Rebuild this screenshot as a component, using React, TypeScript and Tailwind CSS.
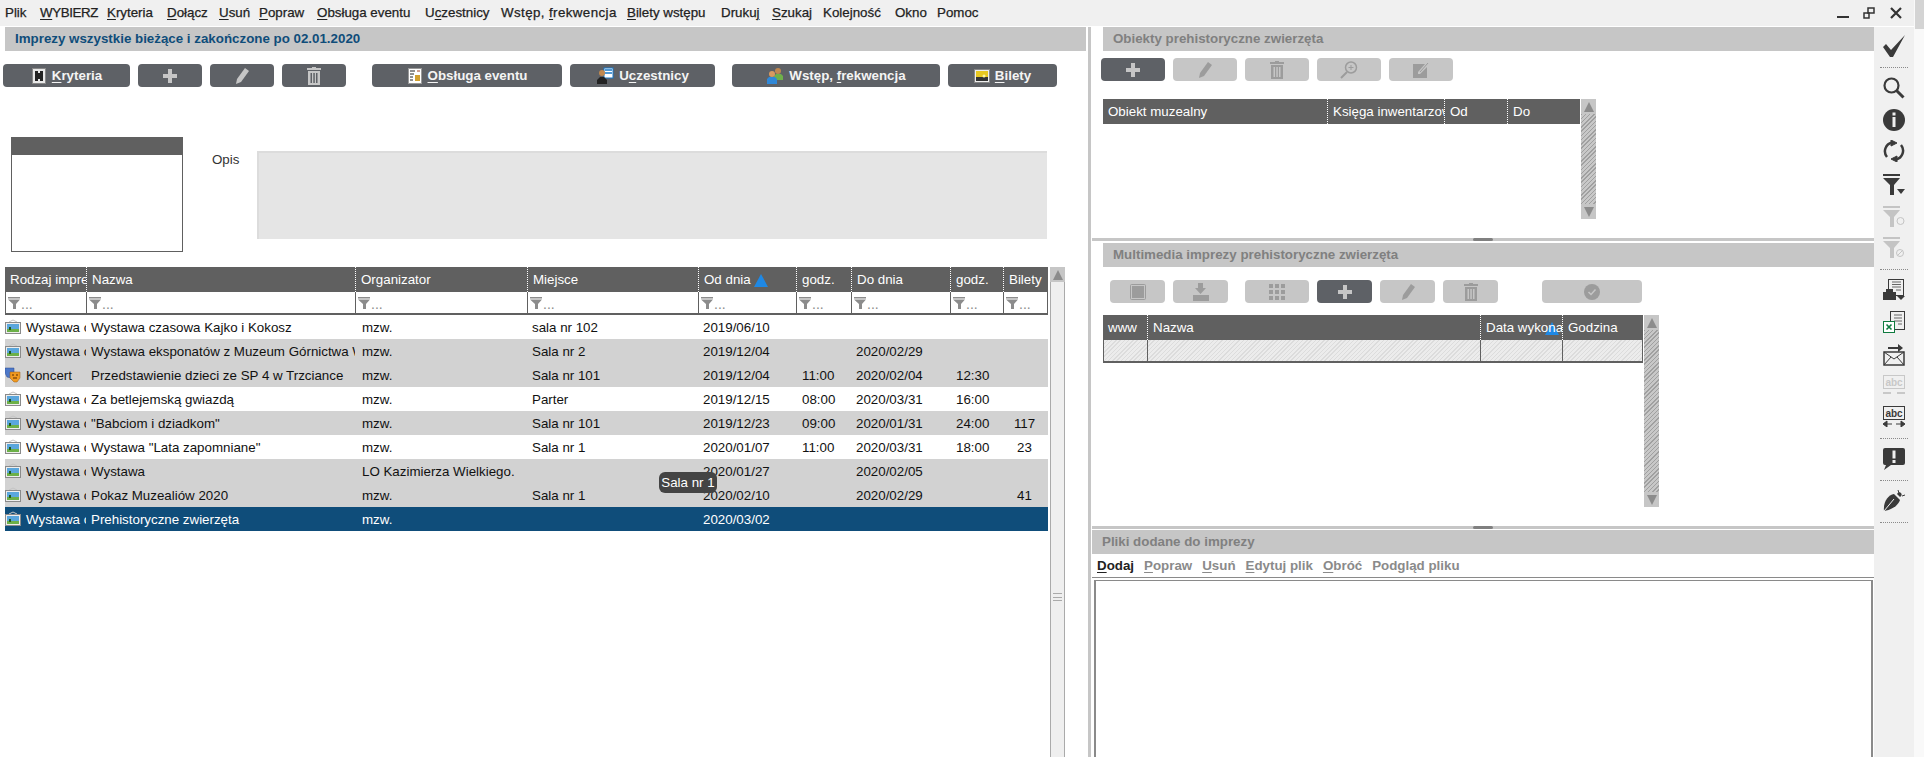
import React from "react";

const menu: [string, string][] = [
  ["Plik", "w-[35px]"],
  ["&WYBIERZ", "w-[67px] tracking-[-0.4px]"],
  ["&Kryteria", "w-[60px]"],
  ["&Dołącz", "w-[52px]"],
  ["&Usuń", "w-[40px]"],
  ["&Popraw", "w-[58px]"],
  ["&Obsługa eventu", "w-[108px]"],
  ["U&czestnicy", "w-[76px]"],
  ["Wstęp, &frekwencja", "w-[126px] tracking-[0.4px]"],
  ["&Bilety wstępu", "w-[94px]"],
  ["Druku&j", "w-[51px]"],
  ["&Szukaj", "w-[51px]"],
  ["Kolejność", "w-[72px]"],
  ["Okno", "w-[42px]"],
  ["Pomoc", "w-[50px]"],
];

// "&" marks the underlined access key letter
const Key = ({ text }: { text: string }) => {
  const i = text.indexOf("&");
  if (i < 0) return <>{text}</>;
  return (
    <>
      {text.slice(0, i)}
      <u className="underline-offset-2">{text[i + 1]}</u>
      {text.slice(i + 2)}
    </>
  );
};

const Plus = () => (
  <svg width="16" height="16" viewBox="0 0 16 16"><path d="M6 1h4v5h5v4h-5v5H6v-5H1V6h5z" fill="currentColor" /></svg>
);
const Pencil = () => (
  <svg width="16" height="18" viewBox="0 0 16 18"><path d="M11 1l4 3-8 11-5 2 1-5z" fill="currentColor" /></svg>
);
const Trash = () => (
  <svg width="14" height="18" viewBox="0 0 14 18"><path d="M5 0h4v1h5v2H0V1h5zM1 4h12v14H1zM3.500 6v10h1.500V6zM6.300 6v10h1.500V6zM9 6v10h1.500V6z" fill="currentColor" fillRule="evenodd" /></svg>
);
const ZoomPlus = () => (
  <svg width="18" height="18" viewBox="0 0 18 18" fill="none" stroke="currentColor"><circle cx="11" cy="6.500" r="5.500" strokeWidth="1.500" /><path d="M11 4v5M8.500 6.500h5" /><path d="M7 11l-6 6" strokeWidth="2" /></svg>
);
const EditBox = () => (
  <svg width="16" height="16" viewBox="0 0 16 16"><path d="M0 2h12L5 10v2h2l7-7v11H0z" fill="currentColor" /><path d="M7 10l8-9" stroke="currentColor" /></svg>
);
const Stop = () => (
  <svg width="16" height="16" viewBox="0 0 16 16" fill="none"><rect x="0.500" y="0.500" width="15" height="15" rx="1" stroke="currentColor" /><rect x="2" y="2" width="12" height="12" fill="currentColor" /></svg>
);
const Download = () => (
  <svg width="18" height="18" viewBox="0 0 18 18"><path d="M6 0h5v5h3l-5.500 6L3 5h3zM1 12h16v6H1z" fill="currentColor" /></svg>
);
const Grid = () => (
  <svg width="16" height="16" viewBox="0 0 16 16" fill="currentColor">
    {[0, 6, 12].map((y) => [0, 6, 12].map((x) => <rect key={`${x}-${y}`} x={x} y={y} width="4" height="4" />))}
  </svg>
);
const CheckCircle = () => (
  <svg width="16" height="16" viewBox="0 0 16 16"><circle cx="8" cy="8" r="8" fill="currentColor" /><path d="M4.500 8l2.500 2.500 4.500-5" fill="none" stroke="#c6c6c6" strokeWidth="1.500" /></svg>
);

const PictureIcon = () => (
  <svg width="16" height="16" viewBox="0 0 16 16" className="shrink-0">
    <path d="M4 3l4-2 4 2" fill="none" stroke="#c4c4c4" />
    <rect x="0.500" y="3.500" width="15" height="11" fill="#eeeeee" stroke="#8a8a8a" />
    <rect x="2" y="5" width="12" height="5" fill="#5aa6dc" />
    <rect x="2" y="10" width="12" height="3" fill="#6cb048" />
    <rect x="4" y="8" width="2" height="3" fill="#1f5a20" />
  </svg>
);
const MasksIcon = () => (
  <svg width="16" height="16" viewBox="0 0 16 16" className="shrink-0">
    <path d="M0 1h9v6l-3 4-4-1-2-4z" fill="#4d78c8" stroke="#2a4a90" strokeWidth="0.500" />
    <path d="M5 5h10v6l-3 4H9l-4-4z" fill="#f09a20" stroke="#9a5a10" strokeWidth="0.500" />
    <path d="M7 8h2M11 8h2M8 11h4" stroke="#5a2a00" />
  </svg>
);
const PuzzleDoc = () => (
  <svg width="16" height="18" viewBox="0 0 16 18"><rect x="1.500" y="1.500" width="13" height="15" fill="#e8e8e8" stroke="#888" /><path d="M4 4h3v2h2V4h3v10H9v-2H7v2H4z" fill="#222" /></svg>
);
const EventDoc = () => (
  <svg width="16" height="18" viewBox="0 0 16 18"><rect x="1.500" y="1.500" width="13" height="15" fill="#fff" stroke="#999" /><path d="M3 4h5M3 7h4M3 10h3M3 13h3" stroke="#222" /><path d="M8 8h5v6H8z" fill="#d2a030" /><path d="M10 4h3" stroke="#a04020" /></svg>
);
const ParticipantIcon = () => (
  <svg width="18" height="18" viewBox="0 0 18 18"><rect x="8" y="1" width="9" height="10" fill="#fff" stroke="#1878c8" /><path d="M9 3h7M9 6h7" stroke="#1878c8" strokeWidth="1.500" /><circle cx="6" cy="6" r="3" fill="#c08850" /><path d="M1 17v-4l3-3h4l3 3v4z" fill="#222" /></svg>
);
const PeopleIcon = () => (
  <svg width="18" height="18" viewBox="0 0 18 18"><circle cx="12" cy="4" r="3" fill="#c08850" /><path d="M8 13V9l2-2h5l2 2v4z" fill="#6fb04a" /><circle cx="6" cy="7" r="3" fill="#d89a60" /><path d="M1 17v-5l2-2h6l2 2v5z" fill="#3088d8" /></svg>
);
const TicketIcon = () => (
  <svg width="16" height="14" viewBox="0 0 16 14"><rect x="0.500" y="0.500" width="15" height="13" fill="#eee" stroke="#888" /><rect x="2" y="2" width="12" height="6" fill="#e8c820" /><rect x="2" y="8" width="12" height="4" fill="#333" /><circle cx="10" cy="7" r="1.500" fill="#fff6a0" /></svg>
);

const Btn = ({ w, off, children }: { w: string; off?: boolean; children: React.ReactNode }) => (
  <button className={`${w} h-[23px] shrink-0 rounded-[4px] flex items-center justify-center gap-[5px] text-[13.33px] font-bold text-[#f4f4f4] ${off ? "bg-[#c6c6c6] text-[#999999]" : "bg-[#5e6166]"}`}>
    {children}
  </button>
);
const IconTint = ({ off, children }: { off?: boolean; children: React.ReactNode }) => (
  <span className={`flex ${off ? "text-[#9c9c9c]" : "text-[#c6c6c6]"}`}>{children}</span>
);

const Funnel = ({ className = "" }: { className?: string }) => (
  <svg width="12" height="12" viewBox="0 0 12 12" className={className}><path d="M0 0h12v1.500H0zM0 2.500h12L8 7v5H5V7z" fill="currentColor" /></svg>
);

const cols = ["w-[81px]", "w-[269px]", "w-[172px]", "w-[171px]", "w-[98px]", "w-[55px]", "w-[99px]", "w-[53px]", "w-[45px]"];
const heads = ["Rodzaj imprezy", "Nazwa", "Organizator", "Miejsce", "Od dnia", "godz.", "Do dnia", "godz.", "Bilety"];

type Row = { kind: "w" | "k"; cells: string[]; tone: string };
const W = "Wystawa czasowa";
const GRAY = "bg-[#d2d2d2] text-[#111111]";
const WHITE = "bg-white text-[#111111]";
const rows: Row[] = [
  { kind: "w", tone: WHITE, cells: [W, "Wystawa czasowa Kajko i Kokosz", "mzw.", "sala nr 102", "2019/06/10", "", "", "", ""] },
  { kind: "w", tone: GRAY, cells: [W, "Wystawa eksponatów z Muzeum Górnictwa Węglowego", "mzw.", "Sala nr 2", "2019/12/04", "", "2020/02/29", "", ""] },
  { kind: "k", tone: GRAY, cells: ["Koncert", "Przedstawienie dzieci ze SP 4 w Trzciance", "mzw.", "Sala nr 101", "2019/12/04", "11:00", "2020/02/04", "12:30", ""] },
  { kind: "w", tone: WHITE, cells: [W, "Za betlejemską gwiazdą", "mzw.", "Parter", "2019/12/15", "08:00", "2020/03/31", "16:00", ""] },
  { kind: "w", tone: GRAY, cells: [W, "\"Babciom i dziadkom\"", "mzw.", "Sala nr 101", "2019/12/23", "09:00", "2020/01/31", "24:00", "117"] },
  { kind: "w", tone: WHITE, cells: [W, "Wystawa \"Lata zapomniane\"", "mzw.", "Sala nr 1", "2020/01/07", "11:00", "2020/03/31", "18:00", "23"] },
  { kind: "w", tone: GRAY, cells: [W, "Wystawa", "LO Kazimierza Wielkiego.", "", "2020/01/27", "", "2020/02/05", "", ""] },
  { kind: "w", tone: GRAY, cells: [W, "Pokaz Muzealiów 2020", "mzw.", "Sala nr 1", "2020/02/10", "", "2020/02/29", "", "41"] },
  { kind: "w", tone: "bg-[#0f4d7a] text-white", cells: [W, "Prehistoryczne zwierzęta", "mzw.", "", "2020/03/02", "", "", "", ""] },
];

const SortUp = ({ className }: { className: string }) => (
  <svg width="14" height="13" viewBox="0 0 14 13" className={className}><path d="M7 0l7 13H0z" fill="#1e88e5" /></svg>
);

const HeadCell = ({ w, first, children }: { w: string; first?: boolean; children: React.ReactNode }) => (
  <div className={`${w} shrink-0 h-full flex items-center pl-[5px] pt-px overflow-hidden whitespace-nowrap text-[13.33px] text-white ${first ? "" : "border-l border-dotted border-white"}`}>
    {children}
  </div>
);

const Arrow = ({ down }: { down?: boolean }) => (
  <div className="h-[15px] flex items-center justify-center bg-[#c6c6c6]">
    <svg width="10" height="10" viewBox="0 0 10 10"><path d={down ? "M0 0h10L5 10z" : "M5 0l5 10H0z"} fill="#8c8c8c" /></svg>
  </div>
);

const HatchBar = ({ className }: { className: string }) => (
  <div className={`${className} flex flex-col shrink-0`}>
    <Arrow />
    <div className="flex-1 bg-[repeating-linear-gradient(135deg,#a0a0a0_0,#a0a0a0_1px,#c8c8c8_1px,#c8c8c8_3px)]" />
    <Arrow down />
  </div>
);

const Splitter = () => (
  <div className="h-[3px] ml-px bg-[#c6c6c6] flex shrink-0">
    <div className="ml-[381px] w-[20px] h-full rounded-sm bg-[#808080]" />
  </div>
);

const DimTitle = ({ className, children }: { className: string; children: React.ReactNode }) => (
  <div className={`${className} h-[24px] shrink-0 bg-[#c6c6c6] flex items-center text-[13.33px] font-bold text-[#808080]`}>{children}</div>
);

const Dots = ({ className }: { className: string }) => <div className={`${className} w-[28px] border-t border-dotted border-[#8a8a8a]`} />;

export default function App() {
  return (
    <div className="relative flex h-screen w-screen overflow-hidden bg-white font-['Liberation_Sans',Arial,sans-serif]">
      <div className="flex flex-col w-[1914px] h-full">
        {/* top menu */}
        <div className="h-[26px] shrink-0 bg-[#f0f0f0] flex items-center pl-[5px] text-[13.33px] text-[#222222]">
          <div className="flex whitespace-nowrap [-webkit-text-stroke:0.25px_#222222]">
            {menu.map(([m, w]) => (
              <span key={m} className={w}><Key text={m} /></span>
            ))}
          </div>
          <div className="ml-auto flex items-center text-[#333333]">
            <svg width="12" height="12" viewBox="0 0 12 12" className="mr-[14px]"><rect y="9" width="12" height="2" fill="currentColor" /></svg>
            <svg width="12" height="12" viewBox="0 0 12 12" fill="none" stroke="currentColor" strokeWidth="1.500" className="mr-[15px]"><rect x="5" y="1" width="6" height="5" /><rect x="1" y="6" width="5" height="5" /></svg>
            <svg width="12" height="12" viewBox="0 0 12 12" fill="none" stroke="currentColor" strokeWidth="2.200" className="mr-[12px]"><path d="M1 1l10 10M11 1L1 11" /></svg>
          </div>
        </div>

        <div className="flex flex-1 min-h-0 mt-px">
          {/* left panel */}
          <div className="w-[1088px] shrink-0 flex flex-col">
            <div className="ml-[5px] w-[1081px] h-[24px] bg-[#c6c6c6] flex items-center pl-[10px] text-[13.33px] font-bold text-[#0f4d7a]">
              Imprezy wszystkie bieżące i zakończone po 02.01.2020
            </div>

            <div className="mt-[13px] ml-[3px] flex">
              <Btn w="w-[127px]"><PuzzleDoc /><span><Key text="&Kryteria" /></span></Btn>
              <Btn w="w-[64px] ml-[8px]"><IconTint><Plus /></IconTint></Btn>
              <Btn w="w-[64px] ml-[8px]"><IconTint><Pencil /></IconTint></Btn>
              <Btn w="w-[64px] ml-[8px]"><IconTint><Trash /></IconTint></Btn>
              <Btn w="w-[190px] ml-[26px]"><EventDoc /><span><Key text="&Obsługa eventu" /></span></Btn>
              <Btn w="w-[145px] ml-[8px]"><ParticipantIcon /><span><Key text="U&czestnicy" /></span></Btn>
              <Btn w="w-[208px] ml-[17px]"><PeopleIcon /><span><Key text="Wstęp, &frekwencja" /></span></Btn>
              <Btn w="w-[109px] ml-[8px]"><TicketIcon /><span><Key text="&Bilety" /></span></Btn>
            </div>

            <div className="mt-[50px] ml-[11px] flex items-start">
              <div className="w-[172px] h-[115px] border border-[#606060] shrink-0">
                <div className="h-[17px] bg-[#606060]" />
              </div>
              <div className="ml-[29px] w-[45px] mt-[13px] text-[13.33px] text-[#333333]">Opis</div>
              <div className="mt-[14px] w-[790px] h-[88px] bg-[#e5e5e5] border-t-2 border-l-2 border-[#dcdcdc]" />
            </div>

            {/* events table */}
            <div className="mt-[15px] ml-[5px] flex flex-1 min-h-0">
              <div className="w-[1043px] shrink-0">
                <div className="h-[25px] flex bg-[#606060]">
                  {heads.map((h, i) => (
                    <HeadCell key={i} w={cols[i]} first={i === 0}>
                      {h}
                      {h === "Od dnia" && <SortUp className="ml-[3px] shrink-0" />}
                    </HeadCell>
                  ))}
                </div>
                <div className="h-[23px] flex border-b-2 border-[#606060] border-r border-r-[#606060]">
                  {cols.map((c, i) => (
                    <div key={i} className={`${c} shrink-0 border-l border-[#606060] flex items-start pl-[2px] pt-[5px] text-[#8c8c8c] text-[14px]`}>
                      <Funnel />
                      <span className="ml-px leading-[14px]">...</span>
                    </div>
                  ))}
                </div>
                {rows.map((r, ri) => (
                  <div key={ri} className={`h-[24px] flex items-center pt-px text-[13.33px] ${r.tone}`}>
                    {r.cells.map((c, i) => (
                      <div key={i} className={`${cols[i]} shrink-0 overflow-hidden whitespace-nowrap ${i === 0 ? "flex items-center gap-[5px]" : i === 2 ? "pl-[7px]" : i === 5 || i === 7 ? "pl-[6px]" : i === 8 ? "text-center pr-[2px]" : "pl-[5px]"}`}>
                        {i === 0 && (r.kind === "w" ? <PictureIcon /> : <MasksIcon />)}
                        {c}
                      </div>
                    ))}
                  </div>
                ))}
              </div>
              <div className="ml-[2px] w-[15px] shrink-0 flex flex-col">
                <Arrow />
                <div className="flex-1 bg-[#efefef] border-x border-[#aaaaaa] flex flex-col items-center">
                  <div className="mt-[311px] w-[9px] h-[8px] border-y border-[#aaaaaa] flex items-center"><div className="w-full h-px bg-[#aaaaaa]" /></div>
                </div>
              </div>
            </div>
          </div>

          {/* vertical splitter */}
          <div className="w-[3px] shrink-0 bg-[#c6c6c6]" />

          {/* right panels */}
          <div className="w-[783px] shrink-0 flex flex-col">
            <div className="h-[211px] shrink-0 flex flex-col">
              <DimTitle className="ml-[12px] pl-[10px]">Obiekty prehistoryczne zwierzęta</DimTitle>
              <div className="mt-[7px] ml-[10px] flex gap-[8px]">
                <Btn w="w-[64px]"><IconTint><Plus /></IconTint></Btn>
                <Btn w="w-[64px]" off><IconTint off><Pencil /></IconTint></Btn>
                <Btn w="w-[64px]" off><IconTint off><Trash /></IconTint></Btn>
                <Btn w="w-[64px]" off><IconTint off><ZoomPlus /></IconTint></Btn>
                <Btn w="w-[64px]" off><IconTint off><EditBox /></IconTint></Btn>
              </div>
              <div className="mt-[18px] ml-[12px] flex items-start">
                <div className="w-[477px] h-[25px] flex bg-[#606060]">
                  <HeadCell w="w-[224px]" first>Obiekt muzealny</HeadCell>
                  <HeadCell w="w-[117px]">Księga inwentarzowa</HeadCell>
                  <HeadCell w="w-[63px]">Od</HeadCell>
                  <HeadCell w="w-[73px]">Do</HeadCell>
                </div>
                <HatchBar className="ml-px w-[15px] h-[120px]" />
              </div>
            </div>
            <Splitter />
            <div className="h-[285px] shrink-0 flex flex-col pt-[2px]">
              <DimTitle className="ml-[12px] pl-[10px]">Multimedia imprezy prehistoryczne zwierzęta</DimTitle>
              <div className="mt-[13px] ml-[19px] flex">
                <Btn w="w-[55px]" off><IconTint off><Stop /></IconTint></Btn>
                <Btn w="w-[55px] ml-[8px]" off><IconTint off><Download /></IconTint></Btn>
                <Btn w="w-[64px] ml-[17px]" off><IconTint off><Grid /></IconTint></Btn>
                <Btn w="w-[55px] ml-[8px]"><IconTint><Plus /></IconTint></Btn>
                <Btn w="w-[55px] ml-[8px]" off><IconTint off><Pencil /></IconTint></Btn>
                <Btn w="w-[55px] ml-[8px]" off><IconTint off><Trash /></IconTint></Btn>
                <Btn w="w-[100px] ml-[44px]" off><IconTint off><CheckCircle /></IconTint></Btn>
              </div>
              <div className="mt-[12px] ml-[12px] flex items-start">
                <div className="w-[540px] shrink-0">
                  <div className="h-[25px] flex bg-[#606060]">
                    <HeadCell w="w-[44px]" first>www</HeadCell>
                    <HeadCell w="w-[333px]">Nazwa</HeadCell>
                    <div className="relative w-[82px] shrink-0">
                      <SortUp className="absolute right-[3px] top-[7px]" />
                      <div className="relative h-full">
                        <HeadCell w="w-[82px]">Data wykonania</HeadCell>
                      </div>
                    </div>
                    <HeadCell w="w-[81px]">Godzina</HeadCell>
                  </div>
                  <div className="h-[23px] flex border-b-2 border-r border-[#606060] bg-[repeating-linear-gradient(135deg,#dcdcdc_0,#dcdcdc_1px,#ececec_1px,#ececec_3px)]">
                    <div className="w-[44px] shrink-0 border-l border-[#606060]" />
                    <div className="w-[333px] shrink-0 border-l border-[#606060]" />
                    <div className="w-[82px] shrink-0 border-l border-[#606060]" />
                    <div className="w-[80px] shrink-0 border-l border-[#606060]" />
                  </div>
                </div>
                <HatchBar className="ml-px w-[15px] h-[192px]" />
              </div>
            </div>
            <Splitter />
            <div className="flex-1 min-h-0 flex flex-col pt-px ml-px">
              <DimTitle className="pl-[10px]">Pliki dodane do imprezy</DimTitle>
              <div className="h-[24px] shrink-0 flex items-center pl-[5px] gap-[10px] text-[13.33px] font-bold text-[#8a8a8a] border-b border-[#8a8a8a]">
                <span className="text-[#222222]"><Key text="&Dodaj" /></span>
                <span><Key text="&Popraw" /></span>
                <span><Key text="&Usuń" /></span>
                <span><Key text="&Edytuj plik" /></span>
                <span><Key text="&Obróć" /></span>
                <span>Podgląd pliku</span>
              </div>
              <div className="mt-[2px] ml-[2px] mr-px flex-1 border-t border-x-2 border-[#8a8a8a]" />
            </div>
          </div>

          {/* right icon bar */}
          <div className="w-[40px] shrink-0 bg-[#f0f0f0] flex flex-col items-center text-[#3a3a3a]">
            <svg width="22" height="22" viewBox="0 0 22 22" className="mt-[8px]"><path d="M0 12l3-3 5 6L22 0 10 22H7z" fill="currentColor" /></svg>
            <Dots className="mt-[10px]" />
            <svg width="22" height="22" viewBox="0 0 22 22" fill="none" stroke="currentColor" className="mt-[9px]"><circle cx="8.500" cy="8.500" r="7" strokeWidth="2.200" /><path d="M13.500 13.500l7 7" strokeWidth="3" /></svg>
            <svg width="22" height="22" viewBox="0 0 22 22" className="mt-[10px]"><circle cx="11" cy="11" r="11" fill="currentColor" /><rect x="9.500" y="3.500" width="3" height="3" fill="#f0f0f0" /><rect x="9.500" y="8" width="3" height="10" fill="#f0f0f0" /></svg>
            <svg width="22" height="22" viewBox="0 0 22 22" fill="none" stroke="currentColor" strokeWidth="2.500" className="mt-[9px]"><path d="M4 17A9 9 0 0 1 9 2.500" /><path d="M18 5a9 9 0 0 1-5 14.500" /><path d="M8 0l6 3-6 3z M14 22l-6-3 6-3z" fill="currentColor" strokeWidth="1" /></svg>
            <svg width="22" height="21" viewBox="0 0 22 21" className="mt-[12px]"><path d="M0 0h17v2H0zM0 4h17l-6 7v10H7V11z" fill="currentColor" /><path d="M14 15h8l-4 5z" fill="currentColor" /></svg>
            <svg width="22" height="21" viewBox="0 0 22 21" className="mt-[11px] text-[#c4c4c4]"><path d="M0 0h17v2H0zM0 4h17l-6 7v10H7V11z" fill="currentColor" /><circle cx="17.500" cy="15" r="3.500" fill="none" stroke="currentColor" /></svg>
            <svg width="22" height="21" viewBox="0 0 22 21" className="mt-[10px] text-[#c4c4c4]"><path d="M0 0h17v2H0zM0 4h17l-6 7v10H7V11z" fill="currentColor" /><circle cx="17" cy="16" r="3.500" fill="none" stroke="currentColor" /><path d="M14.500 18.500l5-5" stroke="currentColor" /></svg>
            <Dots className="mt-[11px]" />
            <svg width="22" height="22" viewBox="0 0 22 22" className="mt-[9px]"><rect x="5.500" y="0.500" width="15" height="16" fill="#f0f0f0" stroke="currentColor" /><path d="M9 3h9M9 5.500h9M9 8h9M13 11h5" stroke="#666" /><rect x="0" y="13" width="13" height="8" fill="currentColor" /><rect x="3" y="10" width="7" height="3" fill="currentColor" /><path d="M14 17h8l-4 4z" fill="currentColor" /></svg>
            <svg width="22" height="22" viewBox="0 0 22 22" className="mt-[10px]"><rect x="7.500" y="0.500" width="14" height="18" fill="#f0f0f0" stroke="currentColor" /><path d="M11 4h8M11 7h8M11 10h8M15 13h4" stroke="#666" /><rect x="0.500" y="10.500" width="11" height="11" fill="#fff" stroke="#0f7b3f" /><path d="M3.500 13.500l5 5M8.500 13.500l-5 5" stroke="#0f7b3f" strokeWidth="1.600" /></svg>
            <svg width="22" height="22" viewBox="0 0 22 22" className="mt-[11px]"><path d="M5 3h10V0l5 4-5 4V5H5z" fill="currentColor" /><rect x="1" y="8" width="20" height="13" fill="#f0f0f0" stroke="currentColor" strokeWidth="1.500" /><path d="M1 8l10 7 10-7M1 21l7-8M21 21l-7-8" fill="none" stroke="currentColor" /></svg>
            <svg width="22" height="21" viewBox="0 0 22 21" className="mt-[9px] text-[#c8c8c8]"><rect x="0.500" y="0.500" width="21" height="13" fill="#f0f0f0" stroke="currentColor" /><path d="M0 18h8M14 18h8" stroke="currentColor" strokeWidth="2" /><text x="11" y="11" fontSize="10" fontWeight="700" textAnchor="middle" fill="currentColor">abc</text></svg>
            <svg width="22" height="21" viewBox="0 0 22 21" className="mt-[10px]"><rect x="0.500" y="0.500" width="21" height="13" fill="#f0f0f0" stroke="currentColor" /><path d="M2 18h7M13 18h7M4 15l-4 3 4 3zM18 15l4 3-4 3z" stroke="currentColor" fill="currentColor" strokeWidth="1" /><text x="11" y="11" fontSize="10" fontWeight="700" textAnchor="middle" fill="currentColor">abc</text></svg>
            <Dots className="mt-[11px]" />
            <svg width="22" height="22" viewBox="0 0 22 22" className="mt-[9px]"><path d="M2 0h18a2 2 0 0 1 2 2v13a2 2 0 0 1-2 2H8l-7 5 2-5H2a2 2 0 0 1-2-2V2a2 2 0 0 1 2-2z" fill="currentColor" /><rect x="9.500" y="2.500" width="3" height="8" fill="#f0f0f0" /><rect x="9.500" y="12" width="3" height="3" fill="#f0f0f0" /></svg>
            <Dots className="mt-[10px]" />
            <svg width="22" height="22" viewBox="0 0 22 22" className="mt-[9px]"><path d="M1 21C0 12 5 5 11 4l6 6c-2 6-9 10-16 11z" fill="currentColor" /><path d="M14 4c1-2 3-2 4-1s1 3-1 4z" fill="currentColor" /><path d="M16 3l-1-3M19 6l3-1" stroke="currentColor" /><path d="M1 21L11 9" stroke="#f0f0f0" /></svg>
            <Dots className="mt-[10px]" />
          </div>
        </div>
      </div>

      {/* page scrollbar */}
      <div className="w-[10px] shrink-0 bg-[#f9f9f9] pl-px">
        <div className="h-[29px] bg-[#d4d4d4]" />
      </div>

      {/* tooltip over the table */}
      <div className="absolute left-[659px] top-[472px] h-[21px] w-[58px] rounded-md bg-[#444444] flex items-center justify-center text-[13.33px] text-white">
        Sala nr 1
      </div>
    </div>
  );
}
